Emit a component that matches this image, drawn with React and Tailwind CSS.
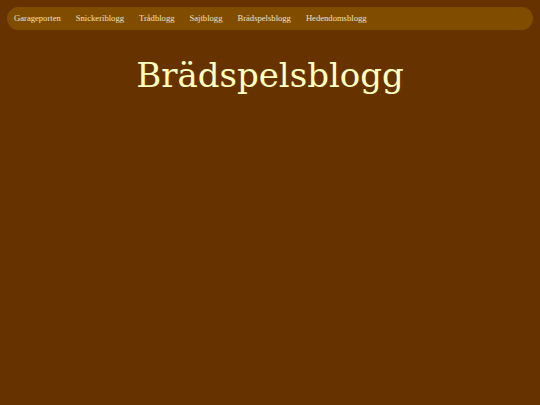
const LINKS = ['Garageporten', 'Snickeriblogg', 'Trådblogg', 'Sajtblogg', 'Brädspelsblogg', 'Hedendomsblogg'];

export default function App() {
  return (
    <div className="min-h-[405px] bg-[#663300] px-[7px] pt-[7px]">
      {/* Nav */}
      <nav className="flex items-center h-[23px] rounded-full bg-[#804c00] px-[7px] gap-[15px]">
        {LINKS.map((l) => (
          <a
            key={l}
            href="#"
            className="text-[8.6px] text-[#f0e2c4] font-['Liberation_Serif',serif]"
          >
            {l}
          </a>
        ))}
      </nav>

      {/* Title */}
      <h1 className="mt-[28px] text-center text-[34px] leading-[34px] text-[#ffffc0] font-['DejaVu_Serif',serif]">
        Brädspelsblogg
      </h1>
    </div>
  );
}
